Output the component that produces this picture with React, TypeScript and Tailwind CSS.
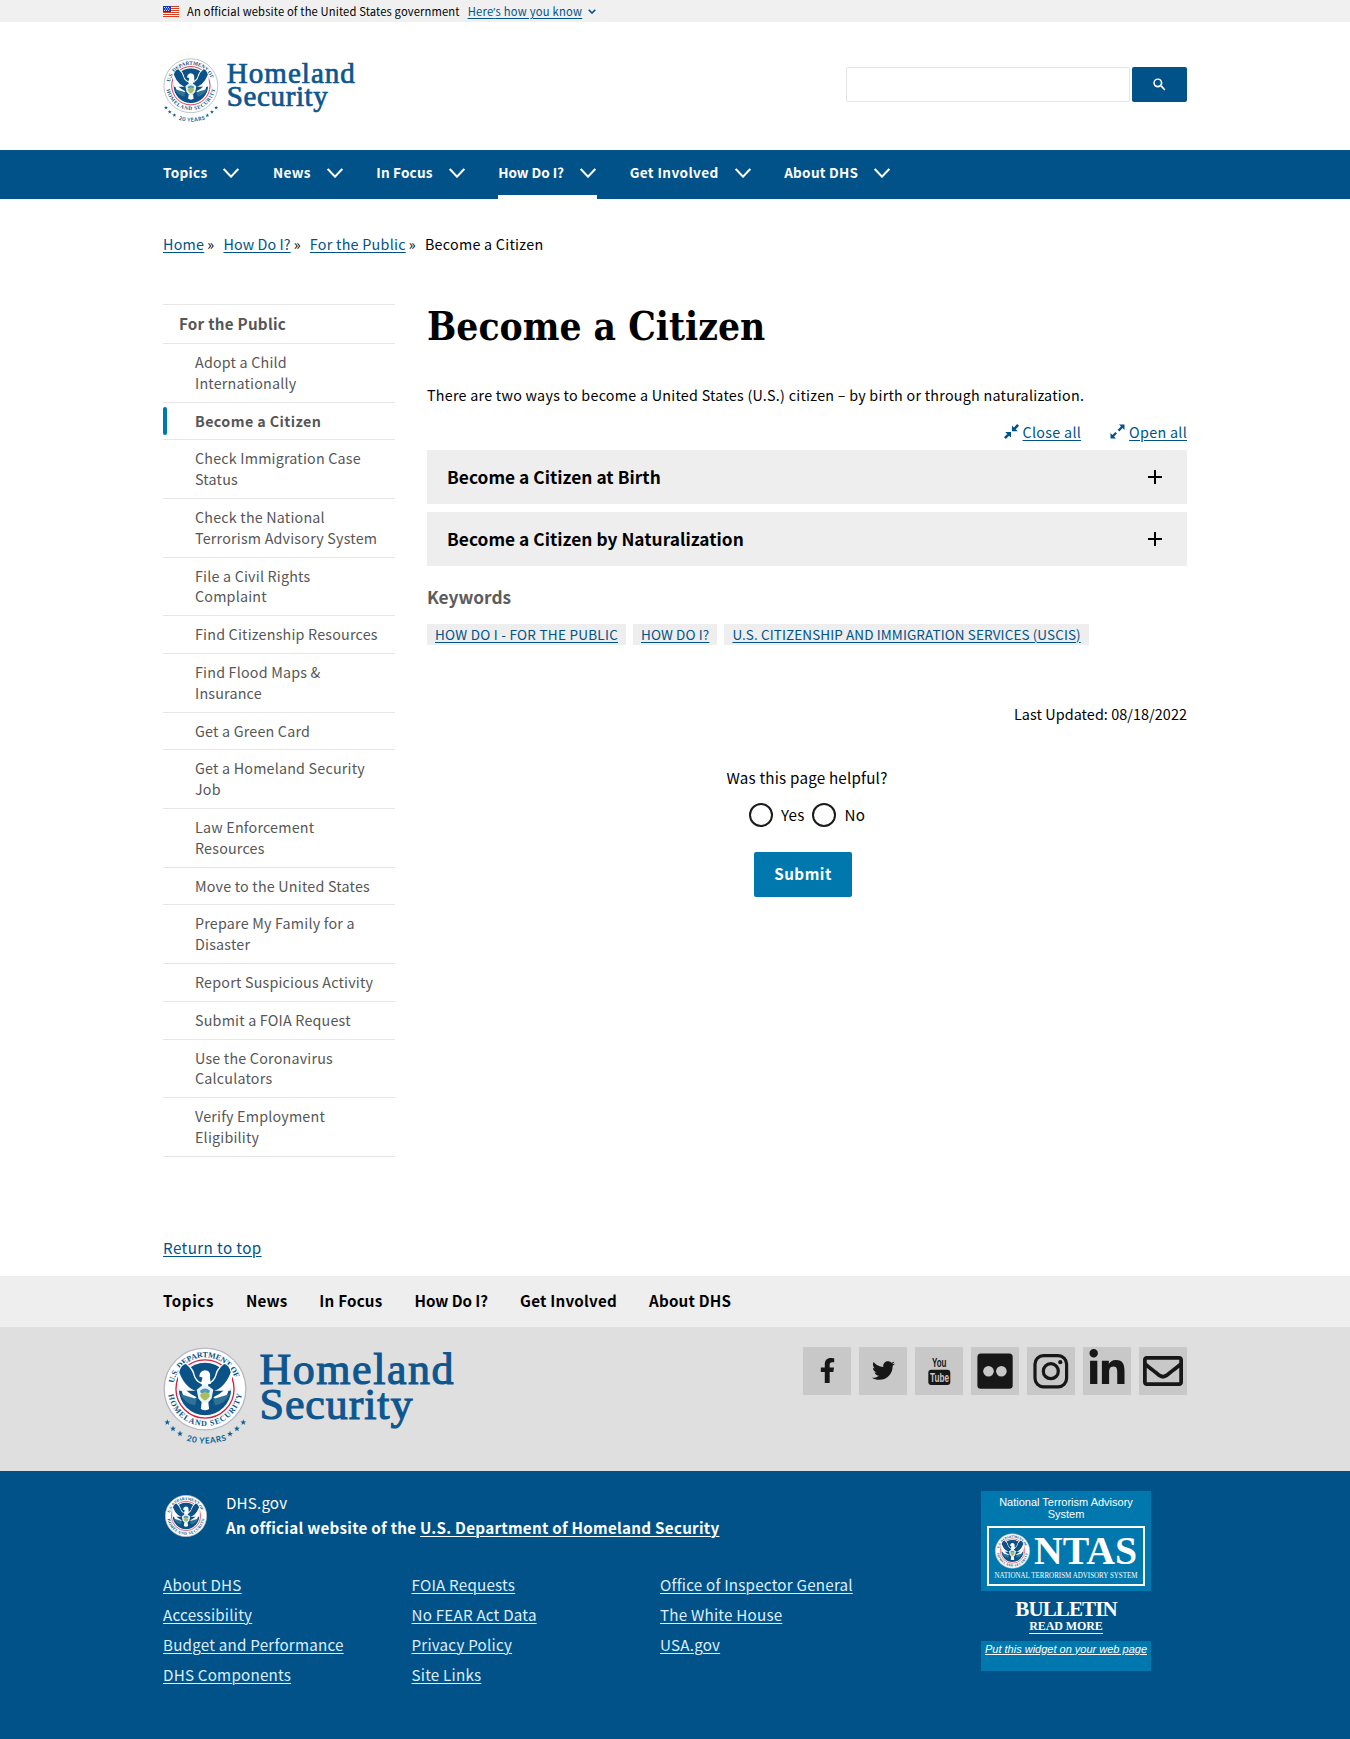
import React from 'react';
import { FaFacebookF, FaTwitter, FaLinkedinIn, FaRegEnvelope } from 'react-icons/fa';

const sideItems = [
  'Adopt a Child Internationally',
  'Become a Citizen',
  'Check Immigration Case Status',
  'Check the National Terrorism Advisory System',
  'File a Civil Rights Complaint',
  'Find Citizenship Resources',
  'Find Flood Maps & Insurance',
  'Get a Green Card',
  'Get a Homeland Security Job',
  'Law Enforcement Resources',
  'Move to the United States',
  'Prepare My Family for a Disaster',
  'Report Suspicious Activity',
  'Submit a FOIA Request',
  'Use the Coronavirus Calculators',
  'Verify Employment Eligibility',
];

const sections = [
  { name: 'Topics', nav: 'tracking-[0.3px]', foot: 'tracking-[0.55px]' },
  { name: 'News', nav: 'tracking-[0.3px]', foot: 'tracking-[0.15px]' },
  { name: 'In Focus', nav: 'tracking-[0.15px]', foot: 'tracking-[0.2px]' },
  { name: 'How Do I?', nav: 'tracking-[-0.05px]', foot: 'tracking-[-0.05px]' },
  { name: 'Get Involved', nav: 'tracking-[0.38px]', foot: 'tracking-[0.22px]' },
  { name: 'About DHS', nav: 'tracking-[0.25px]', foot: 'tracking-[0.2px]' },
];

const footerLinks = [
  ['About DHS', 'Accessibility', 'Budget and Performance', 'DHS Components'],
  ['FOIA Requests', 'No FEAR Act Data', 'Privacy Policy', 'Site Links'],
  ['Office of Inspector General', 'The White House', 'USA.gov'],
];

/* Department seal, drawn around (0,0) with an outer radius of 50. */
function SealArt({ id }: { id: string }) {
  return (
    <g>
      <defs>
        <path id={`${id}-top`} d="M-37.5 9 A38.5 38.5 0 1 1 37.5 9" />
        <path id={`${id}-bottom`} d="M-44.6 4 A44.8 44.8 0 0 0 44.6 4" />
      </defs>
      <circle r="49.2" fill="#fff" stroke="#b4b9c2" strokeWidth="1.6" />
      <circle r="35" fill="#fff" stroke="#d0213f" strokeWidth="1.6" />
      <circle r="31.5" fill="#0b5288" />
      <g fill="#0b5288" fontFamily="Liberation Serif" fontWeight="700" fontSize="9.6">
        <text>
          <textPath href={`#${id}-top`} startOffset="16" textLength="100">U.S. DEPARTMENT OF</textPath>
        </text>
        <text>
          <textPath href={`#${id}-bottom`} startOffset="3" textLength="127">HOMELAND SECURITY</textPath>
        </text>
      </g>
      <path d="M-33-19Q-29-31-23-32Q-15-26-13-20Q-12-12-5-8L5-8Q12-12 13-20Q15-26 24-32Q29-30 33-19L31 2L-31 2Z" fill="#fff" />
      <path d="M-31-20Q-29-29-23-30Q-16-24-14-17Q-12-9-4-6L-3 4Q-22 3-31-20Z" fill="#0b5288" />
      <path d="M31-20Q29-29 23-30Q16-24 14-17Q12-9 4-6L3 4Q22 3 31-20Z" fill="#0b5288" />
      <path d="M-15-27Q0-35 15-27L12-18Q10-12 4-10L-4-10Q-10-12-12-18Z" fill="#0b5288" />
      <path d="M-30-9Q-24 4-10 10L-18 17Q-30 8-30-9Z" fill="#fff" />
      <path d="M30-9Q24 4 10 10L18 17Q30 8 30-9Z" fill="#fff" />
      <path d="M-30 6Q-24 18-12 20L-10 12ZM30 6Q24 18 12 20L10 12Z" fill="#2e7396" />
      <path d="M-6-19Q-3-24 3-22Q7-20 6-14L7-6L-5-6L-3-14L-7-15Z" fill="#fff" />
      <path d="M-10 1Q-5-4 0-5Q5-4 10 1L8 11Q4 17 0 18Q-4 17-8 11Z" fill="#e9f2f5" />
      <path d="M-6 2Q0-3 6 2L5 5L-5 5Z" fill="#4d9ac4" />
      <path d="M-6 7L0 3L6 7Q5 12 0 14Q-5 12-6 7Z" fill="#a9bd5c" />
      <path d="M-4 16L4 16L5 24Q0 27-5 24Z" fill="#fff" />
    </g>
  );
}

function Logo({ id, className }: { id: string; className: string }) {
  const stars = [[4.3, 75.3], [10, 81.7], [17, 86.6], [80.3, 75.3], [73.9, 81.7], [67, 86.8]];
  return (
    <svg viewBox="0 0 292 100" className={className} role="img" aria-label="Homeland Security">
      <defs>
        <path id={`${id}-years`} d="M19 92 Q42 101 67 92" />
      </defs>
      <g transform="translate(42 42) scale(.83)">
        <SealArt id={id} />
      </g>
      {stars.map(([x, y]) => (
        <path
          key={x}
          transform={`translate(${x} ${y})`}
          d="M0-3L.8-.9L3-.9L1.2.4L1.9 2.6L0 1.3L-1.9 2.6L-1.2.4L-3-.9L-.8-.9Z"
          fill="#0b5f96"
        />
      ))}
      <text fontFamily="Lato" fontWeight="700" fontSize="8.2" fill="#0b5f96">
        <textPath href={`#${id}-years`} startOffset="4.500" textLength="41">20 YEARS</textPath>
      </text>
      <g fontFamily="Liberation Serif" fontSize="44" fill="#0d568f" stroke="#0d568f" strokeWidth="1.100">
        <text x="96.500" y="37.300" textLength="194">Homeland</text>
        <text x="96.500" y="72.300" textLength="153">Security</text>
      </g>
    </svg>
  );
}

function Flag() {
  return (
    <svg viewBox="0 0 16 11" className="h-[11px] w-4">
      <rect width="16" height="11" fill="#fff" />
      <path d="M0 .5h16M0 2.500h16M0 4.500h16M0 6.500h16M0 8.500h16M0 10.500h16" stroke="#db3e1f" />
      <rect width="8" height="6" fill="#1e33b1" />
      <path d="M1 1.500h6M1 4.500h6M2 3h5" stroke="#fff" strokeWidth=".8" strokeDasharray="1 1" />
    </svg>
  );
}

function CollapseIcon() {
  return (
    <svg viewBox="0 0 15 15" className="h-[15px] w-[15px]" fill="#00528f">
      <path d="M8 1.500V7.300H13.800L11.700 5.200L15 1.800L13.200 0L9.900 3.400Z" />
      <path d="M7 13.500V7.900H1.200L3.300 10L0 13.300L1.800 15L5.100 11.700Z" />
    </svg>
  );
}

function ExpandIcon() {
  return (
    <svg viewBox="0 0 15 15" className="h-[15px] w-[15px]" fill="#00528f">
      <path d="M9 .5H14.500V6L12.600 4.100L9.300 7.400L7.700 5.800L11 2.400Z" />
      <path d="M6 14.500H.5V9L2.400 10.900L5.400 7.900L7 9.500L4 12.500Z" />
    </svg>
  );
}

function Accordion({ title }: { title: string }) {
  return (
    <div className="flex h-[54px] items-center justify-between bg-[#eeeeee] pl-5 pr-[25px]">
      <h2 className="text-[17.3px] font-bold leading-6 tracking-[0.04px]">{title}</h2>
      <svg viewBox="0 0 14 14" className="h-3.5 w-3.5" stroke="#000" strokeWidth="2">
        <path d="M7 0V14M0 7H14" />
      </svg>
    </div>
  );
}

function SocialTile({ children }: { children: React.ReactNode }) {
  return <a className="flex h-12 w-12 items-center justify-center bg-[#c8c8c8] text-[#171717]">{children}</a>;
}

function Widget() {
  return (
    <aside className="w-[170px] text-center text-white">
      <div className="h-[100px] bg-[#0078ae] px-1.5 pt-[5px]">
        <p className="font-['Liberation_Sans',sans-serif] text-[11px] leading-3">National Terrorism Advisory System</p>
        <svg viewBox="0 0 158 60" className="mt-1.5 h-[60px] w-[158px]">
          <rect x="1" y="1" width="156" height="58" fill="none" stroke="#fff" strokeWidth="2" />
          <g transform="translate(25.500 25) scale(.35)">
            <SealArt id="ntas" />
          </g>
          <g fontFamily="Liberation Serif" fill="#fff">
            <text x="47" y="38" fontSize="40" fontWeight="700" textLength="103" lengthAdjust="spacingAndGlyphs">NTAS</text>
            <text x="7.500" y="52" fontSize="7.2" textLength="143" lengthAdjust="spacingAndGlyphs">NATIONAL TERRORISM ADVISORY SYSTEM</text>
          </g>
        </svg>
      </div>
      <div className="flex h-[50px] flex-col items-center pt-[7px] font-['Liberation_Serif',serif]">
        <span className="text-[21px] font-bold leading-[22px] tracking-[-0.9px]">BULLETIN</span>
        <span className="border-b border-white text-[12px] font-bold leading-[13px] tracking-[-0.1px]">READ MORE</span>
      </div>
      <div className="h-[30px] bg-[#0078ae] pt-[2px] font-['Liberation_Sans',sans-serif] text-[11px] italic leading-3 underline">
        Put this widget on your web page
      </div>
    </aside>
  );
}

const wrap = 'mx-auto w-[1024px]';
const link = 'text-[#005288] underline decoration-1 underline-offset-2';

export default function App() {
  return (
    <div className="min-h-[1739px] bg-white font-['Noto_Sans_CJK_SC',sans-serif] text-[14.3px] text-black">
      <div className="h-[22px] bg-[#f0f0f0]">
        <div className={`${wrap} flex h-[22px] items-center text-[11.2px] leading-[22px] tracking-[0.14px]`}>
          <Flag />
          <span className="ml-2">An official website of the United States government</span>
          <a className={`${link} ml-2 tracking-[0.24px]`}>
            Here<span className="font-['Open_Sans',sans-serif]">’</span>s how you know
          </a>
          <svg viewBox="0 0 8 5" className="ml-1.5 h-[5px] w-2" fill="none" stroke="#005288" strokeWidth="1.6">
            <path d="M.7.700L4 4L7.300.700" />
          </svg>
        </div>
      </div>

      <header className={`${wrap} flex h-32 items-start justify-between`}>
        <Logo id="logo-head" className="mt-[36px] h-[66px] w-[193px] overflow-visible" />
        <form className="mt-[45px] flex gap-0.5">
          <div className="h-[35px] w-[284px] rounded-[2px] border border-[#e4e5e8] bg-white" />
          <div className="flex h-[35px] w-[55px] items-center justify-center rounded-[2px] bg-[#005288]">
            <svg viewBox="0 0 13 13" className="h-[13px] w-[13px]" fill="#fff">
              <path d="m4.800 7.800c-1.700 0-3-1.300-3-3s1.300-3 3-3 3 1.300 3 3c0 1.700-1.300 3-3 3m4.400 0h-.5l-.2-.2c.6-.7.9-1.600.9-2.600 0-2.500-2-4.500-4.500-4.500-2.600 0-4.600 2-4.600 4.500s2 4.500 4.500 4.500c1.100 0 2.100-.4 2.900-1.100l.2.200v.5l3.500 3.500 1-1-3.200-3.800" />
            </svg>
          </div>
        </form>
      </header>

      <nav className="h-[49px] bg-[#005288]">
        <div className={`${wrap} flex gap-[33px]`}>
          {sections.map((s) => (
            <a
              key={s.name}
              className={`flex h-[49px] items-center border-b-4 pr-[0.6px] text-[13.6px] font-bold leading-[45px] text-white ${s.nav} ${
                s.name === 'How Do I?' ? 'border-white' : 'border-transparent'
              }`}
            >
              {s.name}
              <svg viewBox="0 0 16 10" className="ml-4 h-2.5 w-4" fill="none" stroke="#fff" strokeWidth="2.1">
                <path d="M.7.900L8 8.600L15.300.900" />
              </svg>
            </a>
          ))}
        </div>
      </nav>

      <div className={`${wrap} flex h-[105px] items-start pt-[34px] leading-[21px] tracking-[0.27px]`}>
        <a className={link}>Home</a>
        <span className="ml-[3px] mr-[9px]">»</span>
        <a className={`${link} tracking-[0.1px]`}>How Do I?</a>
        <span className="ml-[3px] mr-[9px]">»</span>
        <a className={link}>For the Public</a>
        <span className="ml-[3px] mr-[9px]">»</span>
        <span>Become a Citizen</span>
      </div>

      <main className={`${wrap} flex gap-8`}>
        <ul className="w-[232px] border-t border-[#e6e6e6] text-[#565656]">
          <li className="h-[39px] border-b border-[#e6e6e6] pt-[7px] pl-4 text-[15.2px] font-bold leading-[22px] tracking-[0.25px]">
            For the Public
          </li>
          {sideItems.map((s) => (
            <li key={s} className="relative border-b border-[#e6e6e6] py-2 pl-8 pr-4 leading-[20.8px] tracking-[0.2px]">
              {s === 'Become a Citizen' && (
                <span className="absolute bottom-1 left-0 top-1 w-1 rounded-full bg-[#0078ae]" />
              )}
              <span className={s === 'Become a Citizen' ? 'font-bold tracking-[0.4px]' : ''}>{s}</span>
            </li>
          ))}
        </ul>

        <section className="w-[760px]">
          <h1 className="font-['DejaVu_Serif_Condensed','DejaVu_Serif',serif] text-[38.600px] font-bold leading-[46px]">
            Become a Citizen
          </h1>
          <p className="mt-[34px] leading-[21px] tracking-[0.26px]">
            There are two ways to become a United States (U.S.) citizen – by birth or through naturalization.
          </p>
          <div className="mt-4 flex h-[29px] items-start justify-end gap-[29px] leading-[21px] tracking-[0.3px]">
            <span className="flex items-center gap-1">
              <CollapseIcon />
              <a className={link}>Close all</a>
            </span>
            <span className="flex items-center gap-1">
              <ExpandIcon />
              <a className={link}>Open all</a>
            </span>
          </div>
          <div className="flex flex-col gap-2">
            <Accordion title="Become a Citizen at Birth" />
            <Accordion title="Become a Citizen by Naturalization" />
          </div>
          <h3 className="mt-[19px] text-[17.3px] font-bold leading-6 text-[#5c5c5c]">Keywords</h3>
          <div className="mt-[15px] flex gap-[7px] text-[13.500px] leading-[21px]">
            <a className={`${link} bg-[#eeeeee] px-2 tracking-[0.26px]`}>HOW DO I - FOR THE PUBLIC</a>
            <a className={`${link} bg-[#eeeeee] px-2 tracking-[0.12px]`}>HOW DO I?</a>
            <a className={`${link} bg-[#eeeeee] px-2 tracking-[0.1px]`}>
              U.S. CITIZENSHIP AND IMMIGRATION SERVICES (USCIS)
            </a>
          </div>
          <p className="mt-[58px] text-right text-[14.4px] leading-[22px] tracking-[0.06px]">Last Updated: 08/18/2022</p>
          <form className="mt-[41px] flex flex-col items-center text-[15.2px] leading-[22px] tracking-[0.2px]">
            <p>Was this page helpful?</p>
            <div className="mt-[15px] flex items-center">
              <span className="h-6 w-6 rounded-full border-2 border-[#1b1b1b]" />
              <span className="ml-2 -mt-0.5">Yes</span>
              <span className="ml-2 h-6 w-6 rounded-full border-2 border-[#1b1b1b]" />
              <span className="ml-2 -mt-0.5">No</span>
            </div>
            <div className="mr-2 mt-[25px] h-[45px] w-[98px] rounded-[2px] bg-[#0078ae] text-center font-bold leading-[42px] tracking-[0.5px] text-white">
              Submit
            </div>
          </form>
        </section>
      </main>

      <div className={`${wrap} h-[119px] pt-[79px] text-[15.2px] leading-[22px] tracking-[0.4px]`}>
        <a className={link}>Return to top</a>
      </div>

      <div className="h-[51px] bg-[#eeeeee]">
        <div className={`${wrap} flex gap-8 text-[15.2px] font-bold leading-[49px]`}>
          {sections.map((s) => (
            <a key={s.name} className={s.foot}>
              {s.name}
            </a>
          ))}
        </div>
      </div>

      <div className="h-36 bg-[#dfdfdf]">
        <div className={`${wrap} flex justify-between pt-5`}>
          <Logo id="logo-foot" className="h-[100px] w-[292px] overflow-visible" />
          <div className="flex gap-2">
            <SocialTile>
              <FaFacebookF className="h-[25px] w-[25px]" />
            </SocialTile>
            <SocialTile>
              <FaTwitter className="h-[23px] w-[23px]" />
            </SocialTile>
            <SocialTile>
              <svg viewBox="0 0 48 48" className="h-12 w-12">
                <rect x="13.300" y="22.700" width="22" height="15.300" rx="3" fill="#171717" />
                <g fontFamily="Liberation Sans" fontWeight="700">
                  <text x="17" y="20" fontSize="12" fill="#171717" textLength="14.500" lengthAdjust="spacingAndGlyphs">You</text>
                  <text x="15" y="35" fontSize="13" fill="#c8c8c8" textLength="19" lengthAdjust="spacingAndGlyphs">Tube</text>
                </g>
              </svg>
            </SocialTile>
            <SocialTile>
              <svg viewBox="0 0 48 48" className="h-12 w-12">
                <rect x="6.400" y="6.600" width="35.300" height="35.200" rx="3.500" fill="#171717" />
                <circle cx="17.500" cy="24.300" r="5.300" fill="#c8c8c8" />
                <circle cx="30.400" cy="24.300" r="5.300" fill="#c8c8c8" />
              </svg>
            </SocialTile>
            <SocialTile>
              <svg viewBox="0 0 48 48" className="h-12 w-12" fill="none" stroke="#171717" strokeWidth="3.200">
                <rect x="8" y="8.600" width="31.600" height="31.200" rx="8.500" />
                <circle cx="23.800" cy="24.200" r="7.500" />
                <circle cx="33.300" cy="15.200" r="2.100" fill="#171717" stroke="none" />
              </svg>
            </SocialTile>
            <SocialTile>
              <FaLinkedinIn className="mb-1 h-10 w-10" />
            </SocialTile>
            <SocialTile>
              <FaRegEnvelope className="h-10 w-10" />
            </SocialTile>
          </div>
        </div>
      </div>

      <footer className="h-[268px] bg-[#005288] text-[15.2px] text-white">
        <div className={`${wrap} flex pt-5`}>
          <div className="w-[818px]">
            <div className="flex pt-px">
              <svg viewBox="-50 -50 100 100" className="ml-[2px] mt-[3px] h-[42px] w-[42px]">
                <SealArt id="seal-foot" />
              </svg>
              <div className="ml-[19px] leading-[25px]">
                <p className="-mt-[2px] tracking-[0.15px]">DHS.gov</p>
                <p className="font-bold tracking-[0.26px]">
                  An official website of the{' '}
                  <a className="underline decoration-1 underline-offset-2">U.S. Department of Homeland Security</a>
                </p>
              </div>
            </div>
            <div className="mt-[29px] flex">
              {footerLinks.map((col) => (
                <ul key={col[0]} className="w-[248.500px] leading-[30px] tracking-[0.21px] text-[#dcefff]">
                  {col.map((t) => (
                    <li key={t}>
                      <a className="underline decoration-1 underline-offset-2">{t}</a>
                    </li>
                  ))}
                </ul>
              ))}
            </div>
          </div>
          <Widget />
        </div>
      </footer>
    </div>
  );
}
